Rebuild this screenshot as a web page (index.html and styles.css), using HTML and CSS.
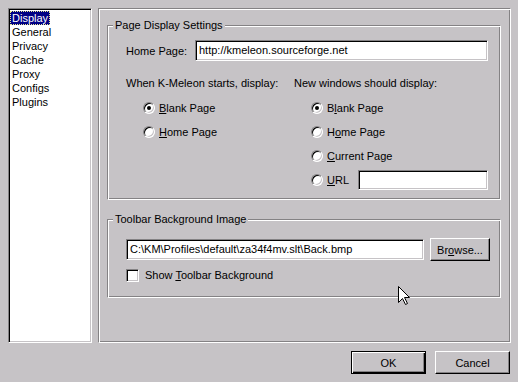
FILE: index.html
```html
<!DOCTYPE html>
<html>
<head>
<meta charset="utf-8">
<link rel="stylesheet" href="styles.css">
</head>
<body>
<div class="dialog">
  <div class="main">
    <div class="list sunken">
      <div class="item selected">Display</div>
      <div class="item">General</div>
      <div class="item">Privacy</div>
      <div class="item">Cache</div>
      <div class="item">Proxy</div>
      <div class="item">Configs</div>
      <div class="item">Plugins</div>
    </div>
    <div class="frame etched">
      <div class="group group-page etched">
        <span class="group-title">Page Display Settings</span>
        <div class="home-row">
          <span class="home-label">Home Page:</span>
          <div class="edit sunken home-edit">http://kmeleon.sourceforge.net</div>
        </div>
        <div class="cols">
          <div class="col col-left">
            <div class="col-label">When K-Meleon starts, display:</div>
            <div class="radio-row"><span class="radio checked"></span><span><u>B</u>lank Page</span></div>
            <div class="radio-row"><span class="radio"></span><span><u>H</u>ome Page</span></div>
          </div>
          <div class="col col-right">
            <div class="col-label">New windows should display:</div>
            <div class="radio-row"><span class="radio checked"></span><span>B<u>l</u>ank Page</span></div>
            <div class="radio-row"><span class="radio"></span><span>H<u>o</u>me Page</span></div>
            <div class="radio-row"><span class="radio"></span><span><u>C</u>urrent Page</span></div>
            <div class="radio-row"><span class="radio"></span><span><u>U</u>RL</span><div class="edit sunken url-edit"></div></div>
          </div>
        </div>
      </div>
      <div class="group group-toolbar etched">
        <span class="group-title">Toolbar Background Image</span>
        <div class="path-row">
          <div class="edit sunken path-edit">C:\KM\Profiles\default\za34f4mv.slt\Back.bmp</div>
          <div class="button browse">Br<u>o</u>wse...</div>
        </div>
        <div class="check-row">
          <span class="checkbox sunken"></span><span>Show <u>T</u>oolbar Background</span>
        </div>
      </div>
    </div>
  </div>
  <div class="buttons">
    <div class="button default">OK</div>
    <div class="button">Cancel</div>
  </div>
</div>
<svg class="cursor" width="12" height="19" viewBox="0 0 12 19">
  <path d="M0.5 0.5 L0.5 16.5 L4.5 12.5 L7.5 18.5 L9.5 17.5 L6.5 11.5 L11.5 11.5 Z" fill="#fff" stroke="#000" stroke-width="1"/>
</svg>
</body>
</html>
```

FILE: styles.css
```css
html, body {
  margin: 0;
  padding: 0;
}
body {
  width: 518px;
  height: 382px;
  overflow: hidden;
  background: #c6c3c6;
  font-family: "Liberation Sans", Arial, sans-serif;
  font-size: 11px;
  color: #000;
  position: relative;
}
u {
  text-decoration: underline;
  text-underline-offset: 1px;
}
.dialog {
  padding: 8px 7px 0 8px;
}
.main {
  display: flex;
  gap: 6px;
  height: 335px;
}
.sunken {
  box-sizing: border-box;
  border: 1px solid;
  border-color: #848284 #fff #fff #848284;
  box-shadow: inset 1px 1px #000, inset -1px -1px #c6c3c6;
  background: #fff;
}
.etched {
  box-sizing: border-box;
  border: 1px solid;
  border-color: #848284 #fff #fff #848284;
  box-shadow: inset 1px 1px #fff, inset -1px -1px #848284;
}
.list {
  width: 84px;
  height: 335px;
  padding: 2px 0 0 1px;
}
.item {
  box-sizing: border-box;
  width: fit-content;
  height: 14px;
  line-height: 12px;
  padding: 0 1px;
  border: 1px solid transparent;
}
.item.selected {
  background: #000084;
  color: #fff;
  border: 1px dotted #e8e890;
}
.frame {
  width: 413px;
  height: 335px;
  padding: 16px 0 0 8px;
}
.group {
  position: relative;
  width: 394px;
}
.group-title {
  position: absolute;
  top: -7px;
  left: 5px;
  padding: 0 2px;
  background: #c6c3c6;
  line-height: 13px;
}
.group-page {
  height: 175px;
  padding: 14px 0 0 18px;
}
.home-row {
  display: flex;
  align-items: center;
}
.home-label {
  width: 69px;
}
.edit {
  height: 21px;
  line-height: 19px;
  padding: 0 3px;
  white-space: nowrap;
  overflow: hidden;
}
.home-edit {
  width: 293px;
}
.cols {
  display: flex;
  margin-top: 16px;
}
.col-left {
  width: 168px;
}
.col-right {
  width: 194px;
}
.col-label {
  line-height: 13px;
  margin-bottom: 6px;
}
.radio-row {
  display: flex;
  align-items: center;
  height: 24px;
  padding-left: 17px;
}
.radio {
  position: relative;
  box-sizing: border-box;
  width: 12px;
  height: 12px;
  border-radius: 50%;
  border: 1px solid;
  border-color: #848284 #fff #fff #848284;
  box-shadow: inset 1px 1px #000, inset -1px -1px #c6c3c6;
  background: #fff;
  margin-right: 4px;
  flex: none;
}
.radio.checked::after {
  content: "";
  position: absolute;
  left: 3px;
  top: 3px;
  width: 4px;
  height: 4px;
  border-radius: 50%;
  background: #000;
}
.url-edit {
  width: 130px;
  height: 20px;
  margin-left: auto;
}
.group-toolbar {
  height: 79px;
  margin-top: 19px;
  padding: 18px 0 0 18px;
}
.path-row {
  display: flex;
  align-items: center;
}
.path-edit {
  width: 298px;
}
.button {
  box-sizing: border-box;
  height: 23px;
  display: flex;
  align-items: center;
  justify-content: center;
  border: 1px solid;
  border-color: #fff #000 #000 #fff;
  box-shadow: inset -1px -1px #848284;
  background: #c6c3c6;
}
.browse {
  width: 60px;
  margin-left: 6px;
}
.check-row {
  display: flex;
  align-items: center;
  margin-top: 7px;
  height: 14px;
}
.checkbox {
  width: 13px;
  height: 13px;
  margin-right: 6px;
}
.buttons {
  display: flex;
  justify-content: flex-end;
  gap: 9px;
  margin-top: 8px;
  padding-right: 1px;
}
.buttons .button {
  width: 75px;
}
.button.default {
  border: 1px solid #000;
  box-shadow: inset 1px 1px #fff, inset -1px -1px #000, inset -2px -2px #848284;
}
.cursor {
  position: absolute;
  left: 398px;
  top: 286px;
}
```
